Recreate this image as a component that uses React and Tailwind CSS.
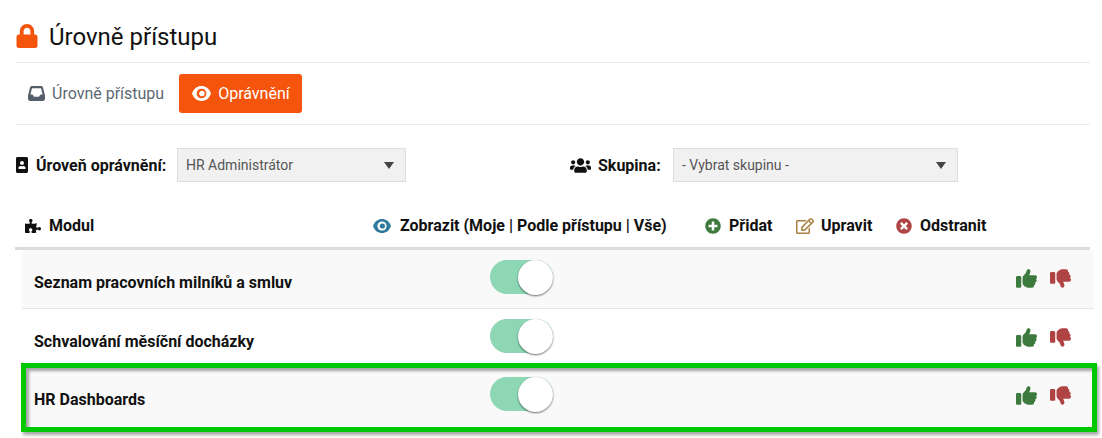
import { FaLock, FaPortrait, FaUsers, FaPuzzlePiece, FaPlusCircle, FaRegEdit, FaTimesCircle } from 'react-icons/fa'
import { FaInbox, FaThumbsUp, FaThumbsDown } from 'react-icons/fa6'

const rows = [
  { name: 'Seznam pracovních milníků a smluv', h: 'h-[59px]', bg: 'bg-[#f9f9f9] border-b border-[#e4e4e4]' },
  { name: 'Schvalování měsíční docházky', h: 'h-[57px]', bg: 'bg-white' },
  { name: 'HR Dashboards', h: 'h-[60px]', bg: 'bg-[#f9f9f9]', marked: true },
]

function Eye({ className, outer, inner, gap }) {
  return (
    <svg viewBox="0 0 18 16" className={className}>
      <path d="M0 8C2 3 5 1 9 1s7 2 9 7c-2 5-5 7-9 7s-7-2-9-7z" fill={outer} />
      <circle cx="9" cy="8" r="4.6" fill={gap} />
      <circle cx="9.4" cy="8" r="2.6" fill={inner} />
    </svg>
  )
}

function Select({ label, width }) {
  return (
    <div className={`${width} h-[34px] flex items-center justify-between pl-2 pr-[11px] bg-[#f1f1f1] border border-[#dedede] text-[14px] font-normal text-[#555]`}>
      <span>{label}</span>
      <span className="w-0 h-0 border-x-[5px] border-x-transparent border-t-[7px] border-t-[#444]" />
    </div>
  )
}

function Toggle() {
  return (
    <div className="relative w-[63px] h-[35px]">
      <div className="w-[63px] h-[34px] rounded-full bg-[#8dd7b4]" />
      <div className="absolute right-0 top-0 w-[35px] h-[35px] rounded-full bg-white shadow-[0_1px_2px_rgba(0,0,0,0.55)]" />
    </div>
  )
}

function Row({ row }) {
  return (
    <div className={`${row.h} ${row.bg} flex items-center ml-[7px] pl-[12px] ${row.marked ? 'relative' : ''}`}>
      <span className="w-[456px] text-[16px] font-bold text-[#111] pt-[8px]">{row.name}</span>
      <div className="-mt-[3px]"><Toggle /></div>
      <div className="flex-1 flex justify-end items-center gap-[13px] pr-[23px] -mt-[1px] text-[21px]">
        <FaThumbsUp className="text-[#3d7a3d]" />
        <FaThumbsDown className="text-[#b04444]" />
      </div>
      {row.marked && (
        <div className="absolute -left-[1px] -right-[3px] -top-[3px] -bottom-[6px] border-[5px] border-[#00c800] shadow-[2px_3px_3px_rgba(0,0,0,0.35),inset_3px_3px_3px_rgba(0,0,0,0.35)]" />
      )}
    </div>
  )
}

export default function App() {
  return (
    <div className="w-[1102px] h-[438px] overflow-hidden bg-white pl-[15px] pr-[8px] font-['Roboto',sans-serif]">
      <div className="w-[1075px] h-[63px] pt-[21px] border-b border-[#eaeaea] flex items-start gap-[10px]">
        <FaLock className="text-[24px] text-[#f4540c] mt-[3px]" />
        <h1 className="text-[24px] leading-[32px] text-[#111]">Úrovně přístupu</h1>
      </div>

      <div className="w-[1075px] h-[62px] pt-[11px] border-b border-[#eaeaea] flex items-start gap-[15px]">
        <div className="h-[39px] flex items-center gap-[7px] pl-[13px] text-[16px] text-[#5c6874]">
          <FaInbox className="text-[17px] text-[#555f6b]" />
          Úrovně přístupu
        </div>
        <div className="h-[39px] w-[123px] flex items-center gap-[7px] pl-[13px] rounded-[3px] bg-[#f4540c] text-[16px] text-white">
          <Eye className="w-[19px] h-[17px]" outer="#ffffff" gap="#f4540c" inner="#ffffff" />
          Oprávnění
        </div>
      </div>

      <div className="flex items-center h-[34px] mt-[23px] text-[16px] font-bold text-[#111]">
        <FaPortrait className="text-[16px] -ml-[1px] mr-[6px]" />
        <span className="w-[141px] pt-[2px]">Úroveň oprávnění:</span>
        <Select label="HR Administrátor" width="w-[229px]" />
        <FaUsers className="text-[21px] ml-[164px] mr-[7px]" />
        <span className="w-[75px] pt-[2px]">Skupina:</span>
        <Select label="- Vybrat skupinu -" width="w-[285px]" />
      </div>

      <div className="w-[1075px] h-[68px] border-b-[3px] border-[#dcdcdc] flex items-center pl-[10px] text-[16px] font-bold text-[#111]">
        <div className="flex items-center w-[348px] pt-[22px]">
          <FaPuzzlePiece className="text-[16px] mr-[8px]" />
          Modul
        </div>
        <div className="flex items-center pt-[22px] w-[332px]">
          <Eye className="w-[18px] h-[16px] mr-[9px]" outer="#2f7a9c" gap="#ffffff" inner="#2f7a9c" />
          Zobrazit (Moje | Podle přístupu | Vše)
        </div>
        <div className="flex items-center pt-[22px] w-[91px]">
          <FaPlusCircle className="text-[16px] text-[#3d7a3d] mr-[8px]" />
          Přidat
        </div>
        <div className="flex items-center pt-[22px] w-[100px]">
          <FaRegEdit className="text-[18px] text-[#a87f3f] mr-[7px]" />
          Upravit
        </div>
        <div className="flex items-center pt-[22px]">
          <FaTimesCircle className="text-[16px] text-[#b04444] mr-[8px]" />
          Odstranit
        </div>
      </div>

      {rows.map((row) => (
        <Row key={row.name} row={row} />
      ))}
    </div>
  )
}
